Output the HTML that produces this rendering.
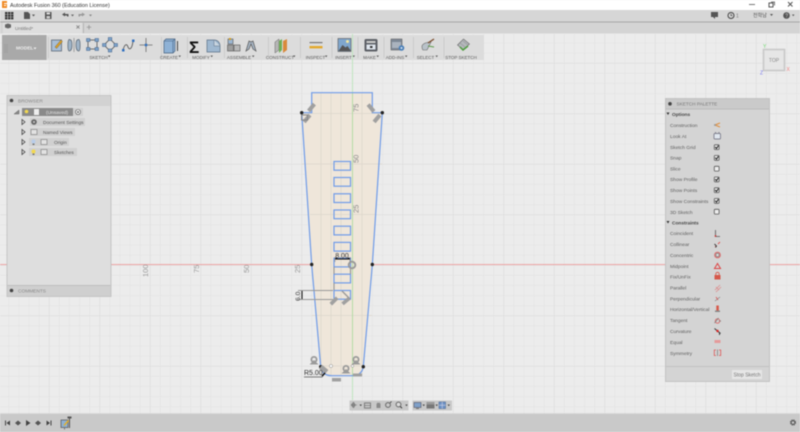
<!DOCTYPE html>
<html><head><meta charset="utf-8"><style>
html,body{margin:0;padding:0;width:800px;height:432px;overflow:hidden;background:#ececec}
svg{display:block;filter:blur(.45px)}
text{font-family:"Liberation Sans","Noto Sans CJK KR",sans-serif}
</style></head><body>
<svg width="800" height="432" viewBox="0 0 800 432" xmlns="http://www.w3.org/2000/svg">
<defs>
<pattern id="mi" width="10.1" height="10.1" x="352" y="265" patternUnits="userSpaceOnUse"><path d="M0 0V10.1M0 0H10.1" stroke="#e1e1e1" stroke-width="1" fill="none"/></pattern>
<pattern id="ma" width="50.5" height="50.5" x="352" y="265" patternUnits="userSpaceOnUse"><path d="M0 0V50.5M0 0H50.5" stroke="#d9d9d9" stroke-width="1" fill="none"/></pattern>
<g id="tri"><circle cx="0" cy="-1.500" r="2.600" fill="none" stroke="#9a9a9a" stroke-width="1.800"/><path d="M-4.500 3.500L0 -1L4.500 3.500Z" fill="#9a9a9a"/></g>
</defs>
<rect width="800" height="432" fill="#ececec"/>
<rect y="34" width="800" height="380" fill="url(#mi)"/>
<rect y="34" width="800" height="380" fill="url(#ma)"/>

<!-- chrome -->
<rect width="800" height="10" fill="#fff"/>
<rect x="2" y="1" width="5" height="7" fill="#f08a24"/><rect x="4" y="3" width="3" height="1" fill="#fff"/><rect x="4" y="5" width="2" height="1" fill="#fff"/>
<text x="10" y="7" font-size="5.400" fill="#333">Autodesk Fusion 360 (Education License)</text>
<path d="M749 4.500h6" stroke="#777" stroke-width="1"/><rect x="769" y="3" width="4" height="4" fill="none" stroke="#555" stroke-width="1"/><path d="M771 2h3.500v3.500" fill="none" stroke="#555" stroke-width=".8"/><path d="M788 2l4.500 4.500M792.500 2L788 6.500" stroke="#555" stroke-width="1"/>
<rect y="10" width="800" height="11.500" fill="#d6d6d6"/><rect y="21.500" width="800" height="1" fill="#a6a6a6"/>
<rect y="22.500" width="800" height="11" fill="#d4d4d4"/>
<rect x="3" y="22.500" width="79" height="11" fill="#dedede"/><rect x="83" y="23" width="1" height="10" fill="#b5b5b5"/>

<!-- top row icons -->
<g fill="#333"><rect x="5" y="12" width="2.400" height="2.200"/><rect x="8" y="12" width="2.400" height="2.200"/><rect x="11" y="12" width="2.400" height="2.200"/><rect x="5" y="14.600" width="2.400" height="2.200"/><rect x="8" y="14.600" width="2.400" height="2.200"/><rect x="11" y="14.600" width="2.400" height="2.200"/><rect x="5" y="17.200" width="2.400" height="2.200"/><rect x="8" y="17.200" width="2.400" height="2.200"/><rect x="11" y="17.200" width="2.400" height="2.200"/></g>
<path d="M24 12h4l2 2v5h-6z" fill="#555"/><path d="M32 14.500h3l-1.500 2z" fill="#555"/>
<rect x="45" y="12" width="6.500" height="7" fill="#555"/><rect x="46.500" y="12.500" width="3.500" height="2" fill="#ddd"/><rect x="46.500" y="16" width="3.500" height="2.500" fill="#ccc"/>
<path d="M62 14.500l3-2v1.500h3.500v2.500h-1.500v-1h-2v1z" fill="#555"/><path d="M71 14.500h3l-1.500 2z" fill="#666"/>
<path d="M85 14.500l-3-2v1.500h-3.500v2.500h1.500v-1h2v1z" fill="#999"/><path d="M89 14.500h3l-1.500 2z" fill="#888"/>
<rect x="711" y="12" width="7" height="5" fill="#555"/><path d="M715 17v2l-2-2z" fill="#555"/>
<circle cx="731" cy="15.500" r="3" fill="none" stroke="#444" stroke-width="1"/><path d="M731 13.800v1.800h1.300" stroke="#444" stroke-width=".7" fill="none"/><text x="736" y="17.500" font-size="5" fill="#777">1</text>
<text x="753" y="17.200" font-size="5" fill="#555">전학남</text><path d="M770 14h3l-1.500 2z" fill="#555"/>
<circle cx="786.500" cy="15.500" r="3.300" fill="#555"/><text x="785.300" y="17.500" font-size="5" fill="#ddd">?</text><path d="M792 14.500h2.500l-1.250 1.800z" fill="#555"/>

<!-- tab -->
<path d="M5 24.500l3-1 3 1v3l-3 1-3-1z" fill="#666"/>
<text x="15" y="30" font-size="4.800" fill="#777">Untitled*</text>
<path d="M76.500 25.500l3 3M79.500 25.500l-3 3" stroke="#777" stroke-width=".8"/>
<path d="M89 25v4.500M86.800 27.200h4.400" stroke="#999" stroke-width=".9"/>

<!-- toolbar -->
<rect x="2" y="35" width="482" height="25" fill="#dcdcdc"/>
<rect x="2" y="35" width="44.500" height="25" fill="#a9a9a9"/>
<path d="M5 44v9M7 44v9" stroke="#999" stroke-width=".7"/>
<text x="16" y="49.500" font-size="4.800" font-weight="bold" fill="#eee">MODEL</text><path d="M33.500 47.500h3l-1.500 2z" fill="#eee"/>
<g stroke="#c8c8c8" stroke-width=".8"><path d="M48.500 37v21M161.500 37v21M187.500 37v21M224.500 37v21M268.500 37v21M300.500 37v21M332 37v21M358 37v21M384 37v21M413.500 37v21M444 37v21"/></g>

<!-- sketch icons -->
<rect x="51.500" y="40" width="10" height="11" fill="#a8bed6" stroke="#5f6b78" stroke-width=".8"/><path d="M55 47l6-7 1.500 1.500-6 7z" fill="#e0a020" stroke="#555" stroke-width=".4"/>
<g fill="#9fb4c8" stroke="#5a6672" stroke-width=".7"><path d="M69 39.500c2.500 0 3 2 3 5.500s-.5 6-3 6c-1.500-1-1.500-10 0-11.500z"/><path d="M79 39.500c-2.500 0-3 2-3 5.500s.5 6 3 6c1.500-1 1.500-10 0-11.500z"/></g><path d="M74 38v14" stroke="#777" stroke-width=".6"/>
<rect x="88" y="40" width="9" height="9" fill="none" stroke="#555" stroke-width=".8"/><g fill="#7ea4cc" stroke="#3f5f86" stroke-width=".5"><rect x="86.500" y="38.500" width="3.500" height="3"/><rect x="95" y="38.500" width="3.500" height="3"/><rect x="86.500" y="47.500" width="3.500" height="3"/><rect x="95" y="47.500" width="3.500" height="3"/></g>
<path d="M110 39l6 6-6 6-6-6z" fill="none" stroke="#555" stroke-width=".8"/><g fill="#7ea4cc" stroke="#3f5f86" stroke-width=".5"><rect x="108.300" y="37.500" width="3.500" height="3"/><rect x="108.300" y="49" width="3.500" height="3"/><rect x="102.500" y="43.500" width="3.500" height="3"/><rect x="114" y="43.500" width="3.500" height="3"/></g>
<path d="M123 50c2-7 4-6 5-3s4 3 5-6" fill="none" stroke="#555" stroke-width=".9"/><rect x="122" y="49" width="2.500" height="2.500" fill="#2f6fc0"/><rect x="132" y="39.500" width="2.500" height="2.500" fill="#2f6fc0"/>
<path d="M146 38v14M139.500 45h13" stroke="#6a6a6a" stroke-width=".8"/><rect x="144.800" y="43.800" width="2.400" height="2.400" fill="#2f6fc0"/>

<!-- create -->
<path d="M164 41l2-2h9v12l-2 2h-9z" fill="#8fb2d6" stroke="#44607f" stroke-width=".7"/><path d="M164 41h9v12M173 41l2-2" fill="none" stroke="#44607f" stroke-width=".6"/><rect x="177" y="41" width="1" height="10" fill="#444"/>
<!-- modify -->
<text x="189" y="53" font-size="17" font-weight="bold" fill="#111">Σ</text>
<path d="M207 40h7c4 0 6 3 6 6v6h-13z" fill="#9fb8d0" stroke="#5a6f86" stroke-width=".7"/><path d="M214 40v6h6" fill="#c9d5e0" stroke="#5a6f86" stroke-width=".5"/>
<!-- assemble -->
<rect x="228" y="39" width="5" height="5" fill="#9cb6d2" stroke="#555" stroke-width=".6"/><rect x="234" y="45" width="6" height="6" fill="#b8b8b8" stroke="#555" stroke-width=".6"/><rect x="227.500" y="45" width="6" height="6" fill="#9e9e9e" stroke="#555" stroke-width=".6"/><rect x="229" y="38" width="2" height="2" fill="#d9a020"/>
<path d="M246 51l3-10 2 1 2-1 3 10-3-2-2-5-2 5z" fill="#a7b5c4" stroke="#555" stroke-width=".7"/>
<!-- construct -->
<path d="M275 42l4-3v11l-4 3z" fill="#b5b5b5" stroke="#666" stroke-width=".5"/><path d="M279 41l3-2v11l-3 3z" fill="#6fae57"/><path d="M283 41l4-2v11l-4 3z" fill="#d98a3c"/>
<!-- inspect -->
<rect x="309.500" y="42" width="13" height="1.200" fill="#777"/><rect x="309.500" y="46" width="13" height="2.400" fill="#e3a92c"/>
<!-- insert -->
<rect x="338" y="38.500" width="13" height="13" fill="#7fa6cc" stroke="#555" stroke-width=".6"/><circle cx="347.500" cy="41.500" r="1.500" fill="#f3e6a0"/><path d="M338.500 51l4-6 3 2.500 2-1.500 3.500 5z" fill="#555"/>
<!-- make -->
<rect x="364.500" y="39" width="13" height="12.500" rx="1.500" fill="#5c6066"/><rect x="366.500" y="41" width="9" height="2" fill="#ccc"/><rect x="366.500" y="44.500" width="9" height="5" fill="#dfe6ee"/><rect x="370" y="46" width="2.500" height="2" fill="#333"/>
<!-- add-ins -->
<rect x="391" y="39" width="11" height="11" fill="#7d8896" stroke="#555" stroke-width=".5"/><rect x="392" y="42" width="9" height="6" fill="#aab3be"/><circle cx="401.500" cy="48" r="2.800" fill="#4a7fb8"/><circle cx="401.500" cy="48" r="1" fill="#dce8f2"/>
<!-- select -->
<path d="M422 46c1-3 6-4 9-4l-1 2-3 6h-4c-1-1-1-3-1-4z" fill="#b9c2c9" stroke="#666" stroke-width=".6"/><path d="M428 43l6-4" stroke="#7a4a2a" stroke-width="1.300"/><path d="M428 46l6 1" stroke="#5d9b4a" stroke-width="1"/>
<!-- stop -->
<path d="M457.500 45l6-6 6 5-6 6z" fill="#b4b8bb" stroke="#666" stroke-width=".6"/><path d="M460 47l3 3 5-4" fill="none" stroke="#4f9c3f" stroke-width="1.500"/><path d="M460 43l5 4M463 41l5 4" stroke="#777" stroke-width=".4"/>

<g font-size="4.500" fill="#5a5a5a" text-anchor="middle">
<text x="98.500" y="58.800">SKETCH</text><text x="169" y="58.800">CREATE</text><text x="201" y="58.800">MODIFY</text><text x="239" y="58.800">ASSEMBLE</text><text x="280" y="58.800">CONSTRUCT</text><text x="315.500" y="58.800">INSPECT</text><text x="343.500" y="58.800">INSERT</text><text x="369.500" y="58.800">MAKE</text><text x="395" y="58.800">ADD-INS</text><text x="425.500" y="58.800">SELECT</text><text x="461" y="58.800">STOP SKETCH</text>
</g>
<g fill="#555"><path d="M108 55.500h2.400l-1.200 1.800zM178.500 55.500h2.400l-1.200 1.800zM210.500 55.500h2.400l-1.200 1.800zM252 55.500h2.400l-1.200 1.800zM293 55.500h2.400l-1.200 1.800zM325 55.500h2.400l-1.200 1.800zM352.500 55.500h2.400l-1.200 1.800zM376.500 55.500h2.400l-1.200 1.800zM405 55.500h2.400l-1.200 1.800zM435.500 55.500h2.400l-1.200 1.800z"/></g>

<!-- viewcube -->
<rect x="763.500" y="49.500" width="21" height="21" fill="#e6e6e6" stroke="#c8c8c8" stroke-width="1.600"/>
<text x="774" y="62" font-size="5" fill="#888" text-anchor="middle">TOP</text>
<text x="763" y="48" font-size="5" fill="#6fd86f">Y</text><text x="786.500" y="71" font-size="5" fill="#f08080">X</text><text x="760" y="74.500" font-size="5" fill="#7878f0">Z</text>

<!-- axes -->
<path d="M0 264.500H665M770 264.500H800" stroke="#f0a8a8" stroke-width="1"/>
<path d="M352.500 34V400" stroke="#bfe6bf" stroke-width="1"/>
<g font-size="7.500" fill="#999">
<text transform="translate(148,277) rotate(-90)">100</text>
<text transform="translate(199,273) rotate(-90)">75</text>
<text transform="translate(249,273) rotate(-90)">50</text>
<text transform="translate(300,273) rotate(-90)">25</text>
</g>

<!-- profile -->
<path d="M311.700 92.700H372.300V112.700H382.300L372.300 265L363.300 366.500Q362 375.700 352 375.700H332Q322 375.700 320.700 366.500L311.700 265L301.700 112.700H311.700Z" fill="#efe6da" stroke="none"/>
<g stroke="#dcd6cb" stroke-width=".7"><path d="M302 113.500H382M302 164H382M310 214.500H376M312 315.500H372M320 366H364M331 93V376M341 93V376M362 93V376M321 93V376"/></g>
<path d="M352.500 93V376" stroke="#b5dca5" stroke-width="1"/>
<g font-size="7.500" fill="#8a8a8a">
<text transform="translate(358.500,112) rotate(-90)">75</text>
<text transform="translate(358.500,163) rotate(-90)">50</text>
<text transform="translate(358.500,213) rotate(-90)">25</text>
</g>
<path d="M311.700 92.700H372.300V112.700H382.300L372.300 265L363.300 366.500Q362 375.700 352 375.700H332Q322 375.700 320.700 366.500L311.700 265L301.700 112.700H311.700Z" fill="none" stroke="#6f9be8" stroke-width="1.200"/>
<g fill="none" stroke="#6f9be8" stroke-width="1.200">
<rect x="334" y="161.500" width="16.500" height="8.700"/><rect x="334" y="177.500" width="16.500" height="8.700"/><rect x="334" y="193.800" width="16.500" height="8.700"/><rect x="334" y="210" width="16.500" height="8.700"/><rect x="334" y="226.200" width="16.500" height="8.700"/><rect x="334" y="242.400" width="16.500" height="8.700"/><rect x="334" y="258.200" width="16.500" height="8.700"/><rect x="334" y="274.200" width="16.500" height="8.700"/><rect x="334" y="290.500" width="16.500" height="8.700"/>
</g>
<path d="M334 267V274M350.500 267V274M334 283V290" stroke="#999" stroke-width="1.200"/>
<g fill="#222"><circle cx="301.700" cy="112.700" r="1.700"/><circle cx="382.300" cy="112.700" r="1.700"/><circle cx="311.700" cy="264.500" r="1.700"/><circle cx="372.300" cy="264.500" r="1.700"/><circle cx="320.700" cy="366.700" r="1.700"/><circle cx="363.300" cy="366.700" r="1.700"/></g>

<!-- constraint glyphs -->
<g fill="#a0a0a0">
<rect x="-2" y="-4.500" width="4" height="9" transform="translate(311.500,107.500) rotate(40)"/>
<rect x="-2" y="-4.500" width="4" height="9" transform="translate(307,118.500) rotate(40)"/>
<rect x="-2" y="-4.500" width="4" height="9" transform="translate(371,108) rotate(-40)"/>
<rect x="-2" y="-4.500" width="4" height="9" transform="translate(377,118.500) rotate(40)"/>
<rect x="-1.800" y="-4.500" width="3.600" height="9" transform="translate(334,301) rotate(45)"/>
<rect x="-1.800" y="-4.500" width="3.600" height="9" transform="translate(346,301) rotate(50)"/>
</g>
<rect x="301.500" y="115" width="6" height="5" fill="none" stroke="#888" stroke-width="1"/>
<path d="M342 291l8 8" stroke="#999" stroke-width="1.300"/>
<circle cx="352" cy="265" r="3.300" fill="none" stroke="#999" stroke-width="1.900"/>
<use href="#tri" x="314" y="361"/><use href="#tri" x="346" y="370"/><use href="#tri" x="356" y="361"/>
<g fill="#a0a0a0"><rect x="320" y="367" width="8" height="5" transform="rotate(40 324 369)"/><rect x="332" y="378" width="9" height="3.500"/><rect x="353" y="373.500" width="9" height="3"/></g>
<circle cx="331" cy="366" r="1.600" fill="#fff" stroke="#888" stroke-width=".5"/><circle cx="352.500" cy="366" r="1.300" fill="#fff" stroke="#888" stroke-width=".5"/>

<!-- dimensions -->
<text x="342" y="258" font-size="7" fill="#333" text-anchor="middle">8.00</text>
<path d="M335 259h15" stroke="#111" stroke-width="1.100"/><path d="M335 259l2-1M350 259l-2-1" stroke="#111" stroke-width="1"/>
<path d="M335 257V262M350 257V262" stroke="#777" stroke-width=".5"/>
<path d="M298 290.500H333M298 299.500H333" stroke="#999" stroke-width="1.100"/>
<path d="M302 291V299" stroke="#111" stroke-width="1.100"/>
<text transform="translate(300,301) rotate(-90)" font-size="6.800" fill="#444">6.0</text>
<text x="304" y="375" font-size="7" fill="#333">R5.00</text>
<path d="M304 377H322L325 373" fill="none" stroke="#555" stroke-width=".8"/><path d="M322 376l3-3" stroke="#111" stroke-width="1.500"/>

<!-- browser -->
<rect x="7" y="95.500" width="104" height="201" fill="#dedede" stroke="#bdbdbd" stroke-width=".8"/>
<rect x="7.500" y="96" width="103" height="10" fill="#d2d2d2"/>
<circle cx="11.500" cy="100.500" r="1.800" fill="#444"/>
<text x="18" y="102.300" font-size="4.800" fill="#888">BROWSER</text>
<rect x="7.500" y="285.500" width="103" height="10.500" fill="#cfcfcf"/><rect x="7.500" y="285" width="103" height=".8" fill="#bbb"/>
<circle cx="11.500" cy="290.500" r="1.800" fill="#444"/>
<text x="18" y="292.500" font-size="4.800" fill="#888">COMMENTS</text>
<rect x="22" y="108" width="51" height="8" fill="#8a8a8a"/><rect x="73" y="108" width="10" height="8" fill="#d0d0d0"/>
<circle cx="26.500" cy="111.500" r="1.800" fill="#f2d850"/><rect x="34" y="109" width="5" height="6" fill="#eee"/>
<text x="46" y="114" font-size="4.800" fill="#e6e6e6">(Unsaved)</text>
<circle cx="78" cy="112" r="2.500" fill="#eee" stroke="#555" stroke-width=".6"/><circle cx="78" cy="112" r=".8" fill="#333"/>
<path d="M14 114l5-4v4z" fill="#888" stroke="#555" stroke-width=".4"/>
<rect x="30" y="118" width="55" height="8" fill="#d0d0d0"/><rect x="30" y="128" width="45" height="8" fill="#d0d0d0"/><rect x="29" y="138" width="40" height="8" fill="#d0d0d0"/><rect x="29" y="148" width="48" height="8" fill="#d0d0d0"/>
<g fill="none" stroke="#444" stroke-width=".8"><path d="M22 119.500l3 2.500-3 2.500zM22 129.500l3 2.500-3 2.500zM22 139.500l3 2.500-3 2.500zM22 149.500l3 2.500-3 2.500z"/></g>
<circle cx="34" cy="122" r="2.800" fill="#666"/><circle cx="34" cy="122" r="1" fill="#ccc"/>
<g fill="#e2e2e2" stroke="#777" stroke-width=".6"><rect x="31" y="129.500" width="6" height="5"/><rect x="41" y="139.500" width="6" height="5"/><rect x="41" y="149.500" width="6" height="5"/></g>
<circle cx="33.500" cy="141.500" r="2" fill="#b8cdea"/><rect x="32.500" y="143.500" width="2" height="1.500" fill="#777"/>
<circle cx="33.500" cy="151.500" r="2" fill="#f2d850"/><rect x="32.500" y="153.500" width="2" height="1.500" fill="#777"/>
<g font-size="4.800" fill="#555"><text x="43" y="124">Document Settings</text><text x="43" y="134">Named Views</text><text x="54" y="144">Origin</text><text x="54" y="154">Sketches</text></g>

<!-- palette -->
<rect x="665.500" y="98.500" width="104" height="283" fill="#d4d4d4" stroke="#bcbcbc" stroke-width=".8"/>
<rect x="666" y="99" width="103" height="10" fill="#cacaca"/><path d="M666 109h103" stroke="#b5b5b5" stroke-width=".8"/>
<circle cx="670" cy="103.800" r="1.800" fill="#444"/>
<text x="676.500" y="105.500" font-size="4.700" fill="#777">SKETCH PALETTE</text>
<path d="M666.500 112.500h3l-1.500 2.500zM666.500 221h3l-1.500 2.500z" fill="#333"/>
<g font-size="4.800" fill="#444" font-weight="bold"><text x="672" y="116">Options</text><text x="672" y="224.500">Constraints</text></g>
<g font-size="4.900" fill="#5e5e5e">
<text x="670" y="127">Construction</text><text x="670" y="138">Look At</text><text x="670" y="149">Sketch Grid</text><text x="670" y="159.500">Snap</text><text x="670" y="170.500">Slice</text><text x="670" y="181">Show Profile</text><text x="670" y="192">Show Points</text><text x="670" y="203">Show Constraints</text><text x="670" y="214">3D Sketch</text>
<text x="670" y="235">Coincident</text><text x="670" y="246">Collinear</text><text x="670" y="257">Concentric</text><text x="670" y="268">Midpoint</text><text x="670" y="278.500">Fix/UnFix</text><text x="670" y="289.500">Parallel</text><text x="670" y="300.500">Perpendicular</text><text x="670" y="311">Horizontal/Vertical</text><text x="670" y="322">Tangent</text><text x="670" y="333">Curvature</text><text x="670" y="344">Equal</text><text x="670" y="355">Symmetry</text>
</g>
<path d="M715 125l5-2M715 125l5 2" stroke="#e09040" stroke-width="1.200"/><circle cx="715" cy="125" r="1" fill="#999"/>
<rect x="714" y="133.500" width="6.500" height="5.500" rx="1" fill="#dfe6ee" stroke="#667" stroke-width=".7"/><path d="M715.500 133v-1M719 133v-1" stroke="#667" stroke-width=".7"/>
<g fill="#eee" stroke="#555" stroke-width=".8"><rect x="714.300" y="144.800" width="4.800" height="4.800" rx=".8"/><rect x="714.300" y="155.500" width="4.800" height="4.800" rx=".8"/><rect x="714.300" y="166.300" width="4.800" height="4.800" rx=".8"/><rect x="714.300" y="177" width="4.800" height="4.800" rx=".8"/><rect x="714.300" y="187.800" width="4.800" height="4.800" rx=".8"/><rect x="714.300" y="198.500" width="4.800" height="4.800" rx=".8"/><rect x="714.300" y="209.300" width="4.800" height="4.800" rx=".8"/></g>
<g fill="none" stroke="#222" stroke-width="1"><path d="M715.200 147l1.300 1.500 2-3M715.200 157.700l1.300 1.500 2-3M715.200 179.200l1.300 1.500 2-3M715.200 190l1.300 1.500 2-3M715.200 200.700l1.300 1.500 2-3"/></g>
<path d="M715.500 230V236.500H720" fill="none" stroke="#555" stroke-width=".8"/><circle cx="715.500" cy="236" r=".9" fill="#c33"/>
<path d="M715 247l1.500-1M718 244l2-2" stroke="#d55" stroke-width=".9"/><path d="M714.500 244l2 2-1 1.500" stroke="#333" stroke-width=".9" fill="none"/>
<circle cx="717.500" cy="255" r="2.800" fill="#999" stroke="#d66" stroke-width="1"/><circle cx="717.500" cy="255" r="1" fill="#eee"/>
<path d="M717.500 263.500l3 5h-6z" fill="none" stroke="#d44" stroke-width="1"/>
<path d="M714.500 275h6v4.500h-6z" fill="#d6584a"/><path d="M715.800 275v-1a1.700 1.700 0 0 1 3.400 0v1" fill="none" stroke="#d6584a" stroke-width=".8"/>
<path d="M715 290l5-5M716 292l5-5M716 287l3 3" stroke="#d88" stroke-width=".7"/>
<path d="M715 301l5-4" stroke="#888" stroke-width=".8"/><path d="M716 297l2 3" stroke="#d55" stroke-width=".8"/>
<rect x="716.300" y="305.500" width="2.500" height="5" fill="#d6584a"/><rect x="715" y="310.500" width="5" height="1.500" fill="#888"/>
<circle cx="717.500" cy="321" r="2.200" fill="none" stroke="#d66" stroke-width=".9"/><path d="M714.500 323l4-5M719 321h2" stroke="#777" stroke-width=".7"/>
<path d="M714.500 328.500l6 5" stroke="#333" stroke-width="1"/><circle cx="717.500" cy="331" r="1.200" fill="#d22"/><path d="M719.500 332.500v2.500" stroke="#333" stroke-width=".9"/>
<rect x="714.500" y="340" width="6" height="3" fill="#e59a9a"/>
<path d="M716 350h-1.700v5.500h1.700M719 350h1.700v5.500h-1.700" fill="none" stroke="#d55" stroke-width=".8"/><path d="M717.500 349.500v6.500" stroke="#666" stroke-width=".6"/>
<path d="M666 366.500h103" stroke="#bcbcbc" stroke-width=".8"/>
<rect x="732" y="370" width="30" height="9" fill="#e6e6e6"/>
<text x="747" y="376.500" font-size="5" fill="#777" text-anchor="middle">Stop Sketch</text>

<!-- nav bar -->
<rect x="349.500" y="400.500" width="59" height="10" fill="#c8c8c8"/><rect x="412.500" y="400.500" width="39.500" height="10" fill="#c8c8c8"/>
<path d="M353.500 402l2 3-2 3-2.500-3zM351 405h6" fill="#888" stroke="#777" stroke-width=".5"/><path d="M359.500 404.500h2.400l-1.200 1.800z" fill="#444"/>
<rect x="364.500" y="403" width="6" height="5" fill="none" stroke="#777" stroke-width=".9"/><path d="M364 405.500h7" stroke="#777" stroke-width=".7"/>
<path d="M376.500 408v-4l1-1.500 1 .5 1-.5 1 1.500v4z" fill="#8a8a8a"/>
<circle cx="388" cy="405" r="2.400" fill="none" stroke="#666" stroke-width="1"/><path d="M390 403l1.500-1.500" stroke="#333" stroke-width=".8"/>
<circle cx="398.500" cy="404.500" r="2.400" fill="#ddd" stroke="#666" stroke-width="1"/><path d="M400.300 406.500l1.700 1.700" stroke="#333" stroke-width="1"/><path d="M405.300 404.500h2.400l-1.200 1.800z" fill="#444"/>
<rect x="414" y="402.500" width="7" height="5" fill="#7fa0c8" stroke="#445" stroke-width=".5"/><path d="M416 408.500h3" stroke="#555" stroke-width=".7"/><path d="M422.500 404.500h2.400l-1.200 1.800z" fill="#444"/>
<rect x="426.500" y="402" width="8" height="6.500" fill="#777"/><rect x="426.500" y="402" width="8" height="2.500" fill="#999"/><path d="M435.500 404.500h2.400l-1.200 1.800z" fill="#444"/>
<rect x="439" y="402" width="6.500" height="6.500" fill="#6f93c6" stroke="#3e5f8f" stroke-width=".5"/><path d="M442.200 402v6.500M439 405.200h6.500" stroke="#dde" stroke-width=".5"/><path d="M447.500 404.500h2.400l-1.200 1.800z" fill="#444"/>

<!-- timeline -->
<rect y="413.500" width="800" height="18.500" fill="#c9c9c9"/><rect y="413" width="800" height=".8" fill="#dcdcdc"/>
<g fill="#444">
<path d="M5 420.500h1v5h-1zM10 420.500v5l-3.500-2.500z"/>
<path d="M15 423l3-2.500v5zM18 420.500l3 2.500-3 2.500z" fill="#555"/>
<path d="M26 420v6l4.500-3z"/>
<path d="M35 423l3-2.500v5zM38 420.500l3 2.500-3 2.500z" fill="#555"/>
<path d="M46.500 420.500v5l3.500-2.500zM50.500 420.500h1v5h-1z"/>
</g>
<rect x="61" y="420" width="7" height="7.500" fill="#8fb0d2" stroke="#555" stroke-width=".7"/><path d="M63.500 425l4.500-5 1 1-4.500 5z" fill="#e8b020"/>
<path d="M69.500 417v11" stroke="#555" stroke-width="1"/><rect x="67.500" y="416.500" width="4" height="2" fill="#555"/><rect x="64" y="428" width="1" height="1.500" fill="#777"/>
<circle cx="793" cy="422.500" r="2.300" fill="none" stroke="#555" stroke-width="1.500" stroke-dasharray="1.200 .6"/><circle cx="793" cy="422.500" r="1.700" fill="none" stroke="#555" stroke-width=".8"/>
</svg>
</body></html>
